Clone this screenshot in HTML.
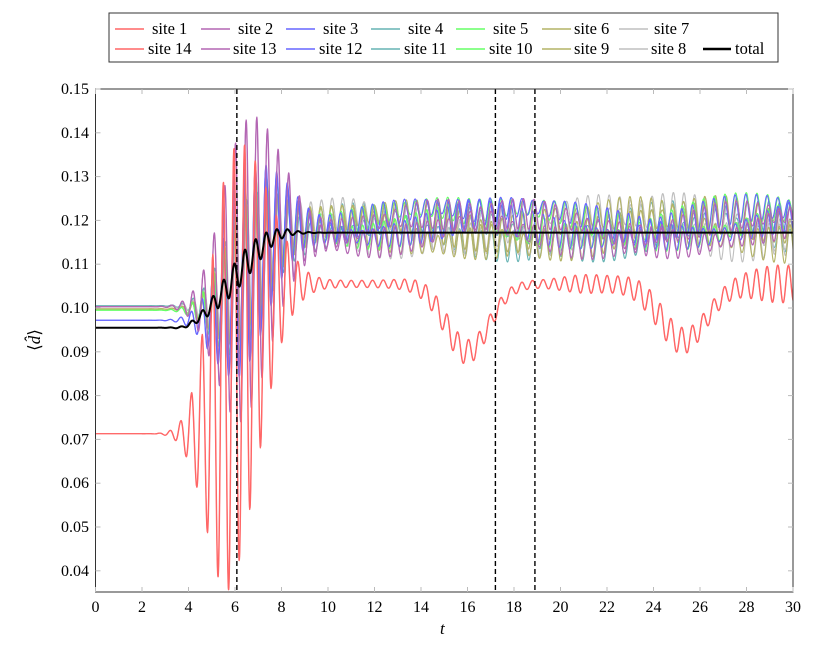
<!DOCTYPE html>
<html><head><meta charset="utf-8">
<style>
html,body{margin:0;padding:0;background:#fff;width:821px;height:655px;overflow:hidden}
svg{display:block}
text{font-family:"Liberation Serif",serif;fill:#000}
</style></head>
<body>
<svg id="s" width="821" height="655" viewBox="0 0 821 655" xmlns="http://www.w3.org/2000/svg">
<rect x="0" y="0" width="821" height="655" fill="#fff"/>
<g id="curves" fill="none" stroke-linejoin="round"></g>
<g id="axes"></g>
<rect x="109" y="13" width="669" height="49" fill="#fff" stroke="#333" stroke-width="1"/>
<g stroke-width="1.6">
<line x1="115" y1="29" x2="144" y2="29" stroke="#ff6666"/>
<line x1="201" y1="29" x2="230" y2="29" stroke="#b366b3"/>
<line x1="286" y1="29" x2="315" y2="29" stroke="#6666ff"/>
<line x1="371" y1="29" x2="400" y2="29" stroke="#66b3b3"/>
<line x1="456" y1="29" x2="485" y2="29" stroke="#66ff66"/>
<line x1="542" y1="29" x2="571" y2="29" stroke="#b3b366"/>
<line x1="619" y1="29" x2="648" y2="29" stroke="#bfbfbf"/>
<line x1="115" y1="49" x2="144" y2="49" stroke="#ff6666"/>
<line x1="201" y1="49" x2="230" y2="49" stroke="#b366b3"/>
<line x1="286" y1="49" x2="315" y2="49" stroke="#6666ff"/>
<line x1="371" y1="49" x2="400" y2="49" stroke="#66b3b3"/>
<line x1="456" y1="49" x2="485" y2="49" stroke="#66ff66"/>
<line x1="542" y1="49" x2="571" y2="49" stroke="#b3b366"/>
<line x1="619" y1="49" x2="648" y2="49" stroke="#bfbfbf"/>
<line x1="703" y1="49" x2="731" y2="49" stroke="#000" stroke-width="2.4"/>
</g>
<g font-size="16.5">
<text x="152" y="34">site 1</text><text x="238" y="34">site 2</text><text x="323" y="34">site 3</text>
<text x="408" y="34">site 4</text><text x="493" y="34">site 5</text><text x="574" y="34">site 6</text>
<text x="654" y="34">site 7</text>
<text x="148" y="54">site 14</text><text x="233" y="54">site 13</text><text x="319" y="54">site 12</text>
<text x="404" y="54">site 11</text><text x="489" y="54">site 10</text><text x="574" y="54">site 9</text>
<text x="651" y="54">site 8</text><text x="735" y="54">total</text>
</g>
<text x="440" y="634" font-size="17" font-style="italic">t</text>
<text transform="translate(40,340) rotate(-90)" font-size="17" text-anchor="middle">⟨<tspan font-style="italic">d̂</tspan>⟩</text>
</svg>
<script>
(function(){
var NS="http://www.w3.org/2000/svg";
function X(t){return 95.5+t*23.25;}
function Y(v){return 89+(0.15-v)*4380;}
function sig(x){return 1/(1+Math.exp(-x));}
function g(t,c,w){var d=(t-c)/w;return Math.exp(-d*d);}
function ss(t,a,b){var x=(t-a)/(b-a);if(x<0)x=0;if(x>1)x=1;return x*x*(3-2*x);}
var cur=document.getElementById("curves"), ax=document.getElementById("axes");
function path(f,col,w){var d="";for(var i=0;i<=3000;i++){var t=i*0.01;var v=f(t);var y=Y(v);if(y>592)y=592;if(y<89)y=89;d+=(i?"L":"M")+X(t).toFixed(2)+" "+y.toFixed(2);}
var p=document.createElementNS(NS,"path");p.setAttribute("d",d);p.setAttribute("stroke",col);p.setAttribute("stroke-width",w);cur.appendChild(p);}
var W=13.7;
function ramp(t){return t<1.6?0:1-Math.exp(-(t-1.6)*1.0);}
var sites=[
 {c:"#66b3b3",s:0.1005,A:0.016,late:0.0035,ph:0.6,lp:1.3,ls:0.45,m:0.1175},
 {c:"#bfbfbf",s:0.1003,A:0.014,late:0.0045,ph:0.2,lp:2.1,ls:0.6,m:0.1185},
 {c:"#b3b366",s:0.0998,A:0.015,late:0.0045,ph:0.4,lp:0.4,ls:0.5,m:0.118},
 {c:"#66ff66",s:0.0995,A:0.018,late:0.0035,ph:0.8,lp:3.0,ls:0.35,m:0.1195},
 {c:"#6666ff",s:0.0972,A:0.022,late:0.0035,ph:1.0,lp:1.8,ls:0.4,m:0.1195},
 {c:"#b366b3",s:0.1003,A:0.034,late:0.0035,ph:0.0,lp:0.9,ls:0.55,m:0.118}
];
sites.forEach(function(o,k){
 for(var r=0;r<2;r++){
  var ph=o.ph+r*0.12, lp=o.lp+r*1.7;
  path(function(t){
   var m=o.s+(o.m-o.s)*ss(t,4.5,8.5);
   var env=t<6.4?o.A*Math.exp(-Math.pow((t-6.4)/1.5,2)):o.A*Math.exp(-Math.pow((t-6.4)/1.9,2));
   env*=ramp(t);
   var late=o.late*sig((t-9)/0.8)*(0.4+0.6*Math.abs(Math.sin(o.ls*t+lp)));
   var drift=0.0035*Math.sin(0.45*t+lp+k)*sig((t-9)/0.8);
   return m+drift+(env+late)*Math.sin(W*t+ph+k*0.15);
  },o.c,r?1.1:1.2);
 }
});
for(var r=0;r<2;r++){(function(r){
 path(function(t){
  var m=0.0713+(0.1055-0.0713)*ss(t,3.8,8.3);
  m-= 0.0155*g(t,16,1.3)+0.013*g(t,25.3,1.4);
  var env=t<5.8?0.05*Math.exp(-Math.pow((t-5.8)/1.3,2)):0.05*Math.exp(-Math.pow((t-5.8)/1.9,2));
  env*=ramp(t);
  var late=sig((t-9)/0.6)*(0.0008+0.0022*g(t,15.5,1.8)+0.0025*g(t,24.5,2)+0.0035*g(t,29.5,2)+0.0012*g(t,21,1.3));
  return m+(env+late)*Math.sin(W*t+1.6+r*0.15);
 },"#ff6666",1.2);})(r);}
path(function(t){
 var m=0.0955+(0.1172-0.0955)*ss(t,3.5,8.3);
 var env=0.0035*g(t,6.3,1.6)*ramp(t);
 return m+env*Math.sin(W*t+1.5);
},"#000",2);
[6.08,17.2,18.9].forEach(function(t){var l=document.createElementNS(NS,"line");l.setAttribute("x1",X(t));l.setAttribute("x2",X(t));l.setAttribute("y1",89);l.setAttribute("y2",592);l.setAttribute("stroke","#000");l.setAttribute("stroke-width","1.4");l.setAttribute("stroke-dasharray","5 3");cur.appendChild(l);});
var h='<rect x="95.5" y="89" width="697.5" height="503" fill="none" stroke="#333" stroke-width="1"/>';
for(var i=0;i<=30;i+=2){var x=X(i);h+='<line x1="'+x+'" y1="592" x2="'+x+'" y2="587" stroke="#bbb"/><line x1="'+x+'" y1="89" x2="'+x+'" y2="94" stroke="#bbb"/>';h+='<text x="'+x+'" y="612" font-size="16" text-anchor="middle">'+i+'</text>';}
for(var j=4;j<=15;j++){var v=j/100,y=Y(v);h+='<line x1="95.5" y1="'+y+'" x2="100.5" y2="'+y+'" stroke="#bbb"/><line x1="788" y1="'+y+'" x2="793" y2="'+y+'" stroke="#bbb"/>';h+='<text x="89" y="'+(y+5)+'" font-size="16" text-anchor="end">'+v.toFixed(2)+'</text>';}
ax.innerHTML=h;
})();
</script>
</body></html>
